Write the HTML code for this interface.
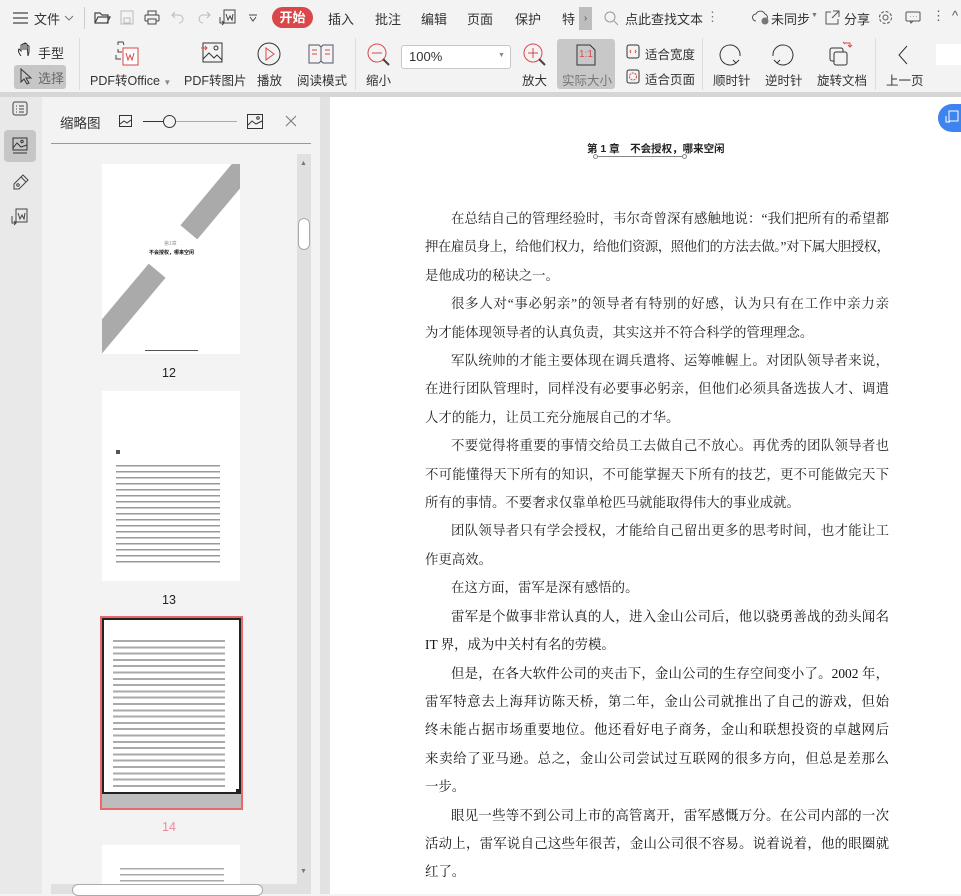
<!DOCTYPE html>
<html><head><meta charset="utf-8"><style>
*{margin:0;padding:0;box-sizing:border-box}
body{width:961px;height:894px;overflow:hidden;background:#f3f3f3;font-family:"Liberation Sans","Noto Sans CJK SC",sans-serif;color:#333;position:relative;font-size:13px}
.a{position:absolute;white-space:nowrap}
.tab{font-size:13px;color:#333}
.lbl{font-size:12.5px;color:#333;text-align:center}
svg{position:absolute;overflow:visible}
.txt{position:absolute;left:425px;top:205px;width:464px;font-family:"Liberation Serif","Noto Serif CJK SC",serif;font-size:13.4px;line-height:28.42px;color:#222}
.txt div{text-align-last:justify;text-align:justify;height:28.42px;white-space:nowrap;overflow:visible}
.txt .i{padding-left:26px}
.txt .e{text-align-last:left}
.k{color:#111}
</style></head><body>
<div class="a" style="left:0;top:0;width:961px;height:35px;background:#f3f3f3"></div>
<svg style="left:13px;top:12px" width="16" height="12"><path d="M0 1H15M0 6H15M0 11H15" stroke="#444" stroke-width="1.3"/></svg>
<div class="a tab" style="left:34px;top:9px">文件</div>
<svg style="left:64px;top:15px" width="10" height="6"><path d="M1 1L5 5L9 1" stroke="#777" fill="none"/></svg>
<div class="a" style="left:84px;top:7px;width:1px;height:22px;background:#ccc"></div>
<svg style="left:94px;top:11px" width="16" height="14"><path d="M1 2H6L8 4H14V12H1Z M1 12L4 6H16L13 12" stroke="#444" fill="none" stroke-width="1.2"/></svg>
<svg style="left:120px;top:10px" width="14" height="15"><rect x="1" y="1" width="12" height="13" stroke="#bbb" fill="none"/><rect x="4" y="8" width="6" height="5" stroke="#bbb" fill="none"/></svg>
<svg style="left:144px;top:10px" width="16" height="15"><rect x="4" y="1" width="8" height="4" stroke="#444" fill="none"/><rect x="1" y="5" width="14" height="6" rx="1" stroke="#444" fill="none"/><rect x="4" y="9" width="8" height="5" stroke="#444" fill="#f3f3f3"/></svg>
<svg style="left:171px;top:11px" width="13" height="12"><path d="M4 1L1 4L4 7M1 4H8A4 4 0 0 1 8 12" stroke="#bbb" fill="none"/></svg>
<svg style="left:198px;top:11px" width="13" height="12"><path d="M9 1L12 4L9 7M12 4H5A4 4 0 0 0 5 12" stroke="#bbb" fill="none"/></svg>
<svg style="left:219px;top:9px" width="17" height="17"><rect x="5" y="1" width="11" height="13" stroke="#444" fill="none"/><path d="M7 5L9 11L11 7L13 11L14 5M1 8V14H5M3 12L5 14L3 16" stroke="#444" fill="none"/></svg>
<svg style="left:248px;top:14px" width="10" height="8"><path d="M1 1H9M2 3L5 7L8 3" stroke="#444" fill="none"/></svg>
<div class="a" style="left:272px;top:7px;width:41px;height:21px;border-radius:11px;background:#d9474a;color:#fff;font-size:13px;text-align:center;line-height:21px;font-weight:bold">开始</div>
<div class="a tab" style="left:328px;top:9px">插入</div>
<div class="a tab" style="left:375px;top:9px">批注</div>
<div class="a tab" style="left:421px;top:9px">编辑</div>
<div class="a tab" style="left:467px;top:9px">页面</div>
<div class="a tab" style="left:515px;top:9px">保护</div>
<div class="a tab" style="left:562px;top:9px">特</div>
<div class="a" style="left:579px;top:7px;width:13px;height:23px;background:#bdbdbd;color:#555;font-size:10px;text-align:center;line-height:23px">›</div>
<svg style="left:604px;top:11px" width="15" height="15"><circle cx="6" cy="6" r="5" stroke="#999" fill="none"/><path d="M10 10L14 14" stroke="#999"/></svg>
<div class="a tab" style="left:625px;top:9px">点此查找文本</div>
<div class="a" style="left:706px;top:9px;color:#777">⋮</div>
<svg style="left:752px;top:9px" width="18" height="16"><path d="M4 12A3.5 3.5 0 0 1 4 5A5 5 0 0 1 13 5A3.5 3.5 0 0 1 15 10" stroke="#555" fill="none"/><circle cx="13" cy="12" r="3.5" fill="#777"/></svg>
<div class="a tab" style="left:771px;top:9px">未同步</div>
<div class="a" style="left:811px;top:12px;font-size:7px;color:#777">▼</div>
<svg style="left:825px;top:10px" width="15" height="15"><path d="M6 2H1V14H13V9M8 1H14V7M14 1L7 8" stroke="#555" fill="none"/></svg>
<div class="a tab" style="left:844px;top:9px">分享</div>
<svg style="left:878px;top:10px" width="15" height="15"><circle cx="7.5" cy="7.5" r="2.5" stroke="#555" fill="none"/><circle cx="7.5" cy="7.5" r="6" stroke="#555" fill="none" stroke-dasharray="3 1.7"/></svg>
<svg style="left:905px;top:11px" width="16" height="13"><rect x="1" y="1" width="14" height="9" rx="1" stroke="#555" fill="none"/><path d="M5 10L6 12L8 10" stroke="#555" fill="none"/><path d="M5 5.5H5.5M8 5.5H8.5M11 5.5H11.5" stroke="#555"/></svg>
<div class="a" style="left:932px;top:8px;color:#555">⋮</div>
<div class="a" style="left:952px;top:8px;color:#555">^</div>
<svg style="left:17px;top:42px" width="18" height="16"><path d="M4 14C1 10 1 8 2 7L4 9V3L6 2V8M6 2L8 1V8M8 1L10 2V8M10 3L12 4V10L11 14Z" stroke="#333" fill="none"/></svg>
<div class="a" style="left:38px;top:43px;font-size:13px">手型</div>
<div class="a" style="left:14px;top:65px;width:52px;height:24px;background:#c6c6c6;border-radius:3px"></div>
<svg style="left:20px;top:68px" width="12" height="16"><path d="M1 1V14L4 11L7 16L9 15L6 10H11Z" stroke="#333" fill="none"/></svg>
<div class="a" style="left:38px;top:68px;font-size:13px;color:#666">选择</div>
<div class="a" style="left:79px;top:38px;width:1px;height:52px;background:#ddd"></div>
<svg style="left:115px;top:41px" width="26" height="26"><path d="M3 4V1H8L9 4M3 8V11H7M1 14V18H6" stroke="#444" fill="none"/><rect x="8" y="7" width="15" height="17" stroke="#d9474a" fill="#fff"/><path d="M11 12L13 19L15 14L17 19L19 12" stroke="#d9474a" fill="none"/></svg>
<div class="a lbl" style="left:90px;top:70px">PDF转Office <span style="font-size:8px;color:#888">▼</span></div>
<svg style="left:201px;top:42px" width="22" height="22"><rect x="2" y="1" width="19" height="19" stroke="#333" fill="none"/><path d="M0 6H6M4 4L6 6L4 8" stroke="#d9474a" fill="none"/><circle cx="15" cy="6" r="2" stroke="#333" fill="none"/><path d="M2 17L8 11L13 16L16 13L21 18" stroke="#333" fill="none"/></svg>
<div class="a lbl" style="left:184px;top:70px">PDF转图片</div>
<svg style="left:257px;top:42px" width="24" height="24"><circle cx="12" cy="12" r="11" stroke="#333" fill="none"/><path d="M9 6L17 12L9 18Z" stroke="#d9474a" fill="none"/></svg>
<div class="a lbl" style="left:257px;top:70px">播放</div>
<svg style="left:308px;top:44px" width="26" height="20"><path d="M1 1H11L13 3L15 1H25V19H15L13 17L11 19H1Z M13 3V17" stroke="#556" fill="none"/><path d="M4 6H9M4 10H9M17 6H22M17 10H22" stroke="#d9474a"/></svg>
<div class="a lbl" style="left:297px;top:70px">阅读模式</div>
<div class="a" style="left:355px;top:38px;width:1px;height:52px;background:#ddd"></div>
<svg style="left:367px;top:43px" width="24" height="24"><circle cx="10" cy="10" r="9" stroke="#d9474a" fill="none"/><path d="M5 10H15" stroke="#d9474a"/><path d="M16 16L22 22" stroke="#444" stroke-width="2"/></svg>
<div class="a lbl" style="left:366px;top:70px">缩小</div>
<div class="a" style="left:401px;top:45px;width:110px;height:24px;border:1px solid #c8c8c8;border-radius:3px;background:#fff"></div>
<div class="a" style="left:409px;top:49px;font-size:13px">100%</div>
<div class="a" style="left:498px;top:52px;font-size:7px;color:#888">▼</div>
<svg style="left:523px;top:43px" width="24" height="24"><circle cx="10" cy="10" r="9" stroke="#d9474a" fill="none"/><path d="M5 10H15M10 5V15" stroke="#d9474a"/><path d="M16 16L22 22" stroke="#444" stroke-width="2"/></svg>
<div class="a lbl" style="left:522px;top:70px">放大</div>
<div class="a" style="left:557px;top:39px;width:58px;height:50px;background:#c8c8c8;border-radius:3px"></div>
<svg style="left:576px;top:44px" width="20" height="22"><path d="M1 1H14L19 6V21H1Z" stroke="#333" fill="none"/></svg>
<div class="a" style="left:579px;top:49px;font-size:10px;color:#d9474a">1:1</div>
<div class="a lbl" style="left:562px;top:70px;color:#777">实际大小</div>
<svg style="left:626px;top:44px" width="14" height="15"><rect x="1" y="1" width="12" height="13" rx="2" stroke="#333" fill="none"/><path d="M5 6L4 7.5L5 9M9 6L10 7.5L9 9" stroke="#d9474a" fill="none"/></svg>
<div class="a" style="left:645px;top:44px;font-size:12.5px">适合宽度</div>
<svg style="left:626px;top:69px" width="14" height="15"><rect x="1" y="1" width="12" height="13" rx="2" stroke="#333" fill="none"/><circle cx="7" cy="7.5" r="3.5" stroke="#d9474a" fill="none" stroke-dasharray="2 1"/></svg>
<div class="a" style="left:645px;top:69px;font-size:12.5px">适合页面</div>
<div class="a" style="left:702px;top:38px;width:1px;height:52px;background:#ddd"></div>
<svg style="left:719px;top:44px" width="24" height="22"><path d="M17 19A10 10 0 1 1 21 12" stroke="#333" fill="none"/><path d="M14 16L17 19L20 16" stroke="#333" fill="none"/></svg>
<div class="a lbl" style="left:713px;top:70px">顺时针</div>
<svg style="left:770px;top:44px" width="24" height="22"><path d="M7 19A10 10 0 1 0 3 12" stroke="#333" fill="none"/><path d="M4 16L7 19L10 16" stroke="#333" fill="none"/></svg>
<div class="a lbl" style="left:765px;top:70px">逆时针</div>
<svg style="left:828px;top:41px" width="26" height="26"><rect x="2" y="7" width="13" height="13" rx="2" stroke="#333" fill="none"/><rect x="6" y="11" width="13" height="13" rx="2" stroke="#333" fill="#f3f3f3"/><path d="M16 2H22V6M20 4L22 6L24 4M15 1L17 3" stroke="#d9474a" fill="none"/></svg>
<div class="a lbl" style="left:817px;top:70px">旋转文档</div>
<div class="a" style="left:875px;top:38px;width:1px;height:52px;background:#ddd"></div>
<svg style="left:897px;top:45px" width="12" height="20"><path d="M10 1L2 10L10 19" stroke="#333" fill="none"/></svg>
<div class="a lbl" style="left:886px;top:70px">上一页</div>
<div class="a" style="left:936px;top:44px;width:25px;height:21px;background:#fff"></div>
<div class="a" style="left:0;top:92px;width:961px;height:5px;background:#d6d6d6"></div>
<div class="a" style="left:0;top:97px;width:42px;height:797px;background:#e9e9e9"></div>
<svg style="left:12px;top:101px" width="16" height="15"><rect x="1" y="1" width="14" height="13" rx="2" stroke="#444" fill="none"/><path d="M4 5H5M7 5H12M4 8H5M7 8H12M4 11H5M7 11H12" stroke="#444"/></svg>
<div class="a" style="left:4px;top:130px;width:32px;height:32px;background:#c6c6c6;border-radius:4px"></div>
<svg style="left:12px;top:137px" width="16" height="18"><rect x="1" y="1" width="14" height="12" stroke="#333" fill="none"/><circle cx="10" cy="4.5" r="1.2" stroke="#333" fill="none"/><path d="M1 11L5 6L9 10L15 8M1 16H15" stroke="#333" fill="none"/></svg>
<svg style="left:12px;top:174px" width="17" height="17"><path d="M2 10L9 3L14 8L7 15L2 15Z M9 3L11 1L16 6L14 8" stroke="#444" fill="none"/><circle cx="6" cy="11" r="1.3" stroke="#444" fill="none"/></svg>
<svg style="left:11px;top:208px" width="18" height="18"><rect x="5" y="1" width="11" height="13" stroke="#444" fill="none"/><path d="M7 5L9 11L11 7L13 11L14 5M1 8V15H5M3 13L5 15L3 17" stroke="#444" fill="none"/></svg>
<div class="a" style="left:42px;top:97px;width:278px;height:797px;background:#f3f3f3"></div>
<div class="a" style="left:60px;top:112px;font-size:13.5px;color:#333">缩略图</div>
<svg style="left:119px;top:115px" width="13" height="12"><rect x="0.5" y="0.5" width="12" height="11" stroke="#333" fill="none"/><path d="M1 9L5 6L8 8L12 5" stroke="#333" fill="none"/></svg>
<div class="a" style="left:143px;top:121px;width:94px;height:1px;background:#aaa"></div>
<div class="a" style="left:143px;top:121px;width:22px;height:1px;background:#333"></div>
<div class="a" style="left:163px;top:115px;width:13px;height:13px;border:1px solid #333;border-radius:50%;background:#f3f3f3"></div>
<svg style="left:247px;top:114px" width="17" height="15"><rect x="0.5" y="0.5" width="15" height="14" stroke="#333" fill="none"/><circle cx="11" cy="4" r="1.3" stroke="#333" fill="none"/><path d="M1 11L5 7L9 10L15 7" stroke="#333" fill="none"/></svg>
<svg style="left:285px;top:115px" width="12" height="12"><path d="M1 1L11 11M11 1L1 11" stroke="#777"/></svg>
<div class="a" style="left:51px;top:143px;width:260px;height:1px;background:#999"></div>
<div class="a" style="left:297px;top:154px;width:14px;height:730px;background:#e0e0e0"></div>
<div class="a" style="left:300px;top:160px;font-size:7px;color:#777">▲</div>
<div class="a" style="left:298px;top:218px;width:12px;height:32px;background:#fff;border:1px solid #aaa;border-radius:6px"></div>
<div class="a" style="left:300px;top:868px;font-size:7px;color:#777">▼</div>
<div class="a" style="left:51px;top:884px;width:260px;height:10px;background:#e0e0e0"></div>
<div class="a" style="left:72px;top:884px;width:191px;height:12px;background:#fff;border:1px solid #aaa;border-radius:6px"></div>
<div class="a" style="left:102px;top:164px;width:138px;height:190px;background:#fff;overflow:hidden">
<div class="a" style="left:108px;top:-20px;width:22px;height:100px;background:#aaa;transform:rotate(40deg)"></div>
<div class="a" style="left:12px;top:95px;width:22px;height:100px;background:#aaa;transform:rotate(40deg)"></div>
<div class="a" style="left:62px;top:76px;font-size:5px;color:#999">第1章</div>
<div class="a" style="left:47px;top:85px;font-size:5px;color:#111;font-weight:bold">不会授权，哪来空闲</div>
<div class="a" style="left:43px;top:186px;width:53px;height:1px;background:#555"></div>
</div>
<div class="a" style="left:162px;top:366px;font-size:12.5px;color:#222">12</div>
<div class="a" style="left:102px;top:391px;width:138px;height:190px;background:#fff"></div>
<div class="a" style="left:116px;top:450px;width:4px;height:4px;background:#555"></div>
<div class="a" style="left:116px;top:465px;width:104px;height:100px;background:repeating-linear-gradient(180deg,#999 0 1.5px,#fff 1.5px 6px)"></div>
<div class="a" style="left:162px;top:593px;font-size:12.5px;color:#222">13</div>
<div class="a" style="left:100px;top:616px;width:143px;height:194px;border:2px solid #e8696b;background:#bdbdbd"></div>
<div class="a" style="left:102px;top:618px;width:139px;height:176px;border:2px solid #222;background:#fff"></div>
<div class="a" style="left:113px;top:640px;width:112px;height:148px;background:repeating-linear-gradient(180deg,#aaa 0 2px,#fff 2px 6.3px)"></div>
<div class="a" style="left:236px;top:789px;width:5px;height:5px;background:#222"></div>
<div class="a" style="left:162px;top:820px;font-size:12.5px;color:#f08aa0">14</div>
<div class="a" style="left:102px;top:845px;width:138px;height:39px;background:#fff"></div>
<div class="a" style="left:120px;top:868px;width:104px;height:16px;background:repeating-linear-gradient(180deg,#aaa 0 1.5px,#fff 1.5px 6px)"></div>
<div class="a" style="left:320px;top:97px;width:10px;height:797px;background:#e2e2e2"></div>
<div class="a" style="left:330px;top:97px;width:631px;height:797px;background:#fff"></div>
<div class="a" style="left:938px;top:104px;width:23px;height:28px;background:#3d84f0;border-radius:14px 0 0 14px"></div>
<svg style="left:945px;top:110px" width="14" height="14"><rect x="4" y="1" width="9" height="10" stroke="#fff" fill="none"/><path d="M1 6V12H5" stroke="#fff" fill="none"/></svg>
<div class="a" style="left:587px;top:141px;font-size:10.5px;font-weight:bold;color:#222">第 1 章　不会授权，哪来空闲</div>
<div class="a" style="left:596px;top:156px;width:88px;height:1px;background:#888"></div>
<div class="a" style="left:593px;top:154px;width:5px;height:5px;border:1px solid #888;border-radius:50%;background:#fff"></div>
<div class="a" style="left:682px;top:154px;width:5px;height:5px;border:1px solid #888;border-radius:50%;background:#fff"></div>
<div class="txt">
<div class="i">在总结自己的管理经验时，韦尔奇曾深有感触地说：“我们把所有的希望都</div>
<div style="letter-spacing:-1px">押在雇员身上，给他们权力，给他们资源，照他们的方法去做。”对下属大胆授权，</div>
<div class="e">是他成功的秘诀之一。</div>
<div class="i">很多人对“事必躬亲”的领导者有特别的好感，认为只有在工作中亲力亲</div>
<div class="e">为才能体现领导者的认真负责，其实这并不符合科学的管理理念。</div>
<div class="i">军队统帅的才能主要体现在调兵遣将、运筹帷幄上。对团队领导者来说，</div>
<div>在进行团队管理时，同样没有必要事必躬亲，但他们必须具备选拔人才、调遣</div>
<div class="e">人才的能力，让员工充分施展自己的才华。</div>
<div class="i">不要觉得将重要的事情交给员工去做自己不放心。再优秀的团队领导者也</div>
<div>不可能懂得天下所有的知识，不可能掌握天下所有的技艺，更不可能做完天下</div>
<div class="e">所有的事情。不要奢求仅靠单枪匹马就能取得伟大的事业成就。</div>
<div class="i">团队领导者只有学会授权，才能给自己留出更多的思考时间，也才能让工</div>
<div class="e">作更高效。</div>
<div class="i e">在这方面，雷军是深有感悟的。</div>
<div class="i k">雷军是个做事非常认真的人，进入金山公司后，他以骁勇善战的劲头闻名</div>
<div class="e k">IT 界，成为中关村有名的劳模。</div>
<div class="i k">但是，在各大软件公司的夹击下，金山公司的生存空间变小了。2002 年，</div>
<div class="k">雷军特意去上海拜访陈天桥，第二年，金山公司就推出了自己的游戏，但始</div>
<div class="k">终未能占据市场重要地位。他还看好电子商务，金山和联想投资的卓越网后</div>
<div class="k">来卖给了亚马逊。总之，金山公司尝试过互联网的很多方向，但总是差那么</div>
<div class="e k">一步。</div>
<div class="i k">眼见一些等不到公司上市的高管离开，雷军感慨万分。在公司内部的一次</div>
<div class="k">活动上，雷军说自己这些年很苦，金山公司很不容易。说着说着，他的眼圈就</div>
<div class="e k">红了。</div>
</div>
</body></html>
